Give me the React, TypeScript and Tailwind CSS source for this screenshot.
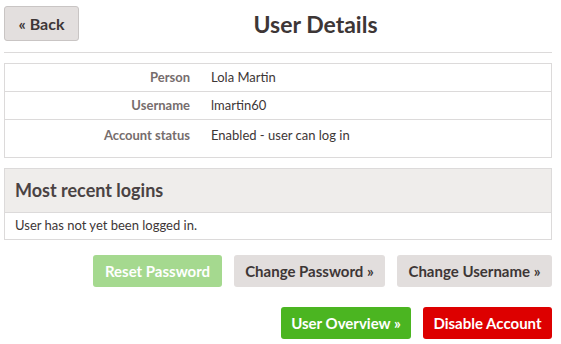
const rows = [
  { label: "Person", value: "Lola Martin", h: "h-[27px] items-center" },
  { label: "Username", value: "lmartin60", h: "h-[28px] items-center border-t border-[#dcdada]" },
  { label: "Account status", value: "Enabled - user can log in", h: "h-[38px] pt-[6px] border-t border-[#dcdada]" },
];

export default function App() {
  return (
    <div
      className="w-[561px] h-[344px] bg-white text-[#3d3636] overflow-hidden"
      style={{ fontFamily: "Lato, 'Noto Sans', sans-serif" }}
    >
      <div className="ml-[4px] w-[548px] pt-[6px]">
        {/* header */}
        <div className="flex items-center border-b border-[#dcdada] pb-[11px]">
          <button className="h-[35px] w-[75px] rounded-[3px] border border-[#c9c5c4] bg-[#e3dfde] text-[16px] font-bold text-[#3d3636]">
            « Back
          </button>
          <h1 className="flex-1 text-center text-[23px] font-bold leading-[30px] text-[#3d3636]">
            User Details
          </h1>
        </div>

        {/* details table */}
        <div className="mt-[10px] border border-[#dcdada]">
          {rows.map((r) => (
            <div key={r.label} className={`flex text-[13px] ${r.h}`}>
              <div className="w-[193px] pr-[8px] text-right font-bold text-[#766d6d]">{r.label}</div>
              <div className="pl-[13px]">{r.value}</div>
            </div>
          ))}
        </div>

        {/* logins */}
        <div className="mt-[10px] border border-[#dcdada]">
          <div className="flex h-[44px] items-center border-b border-[#dcdada] bg-[#efedeb] px-[10px] text-[18px] font-bold text-[#4a4343]">
            Most recent logins
          </div>
          <div className="flex h-[26px] items-center px-[10px] text-[13px]">
            User has not yet been logged in.
          </div>
        </div>

        {/* actions */}
        <div className="mt-[15px] flex justify-end gap-[12px]">
          <button className="h-[32px] w-[129px] rounded-[3px] bg-[#a5d98f] text-[15px] font-bold text-white">
            Reset Password
          </button>
          <button className="h-[32px] w-[151px] rounded-[3px] bg-[#e2dedd] text-[15px] font-bold text-[#3d3636]">
            Change Password »
          </button>
          <button className="h-[32px] w-[155px] rounded-[3px] bg-[#e2dedd] text-[15px] font-bold text-[#3d3636]">
            Change Username »
          </button>
        </div>
        <div className="mt-[20px] flex justify-end gap-[12px]">
          <button className="h-[32px] w-[130px] rounded-[3px] bg-[#4bb521] text-[15px] font-bold text-white">
            User Overview »
          </button>
          <button className="h-[32px] w-[129px] rounded-[3px] bg-[#dd0000] text-[15px] font-bold text-white">
            Disable Account
          </button>
        </div>
      </div>
    </div>
  );
}
